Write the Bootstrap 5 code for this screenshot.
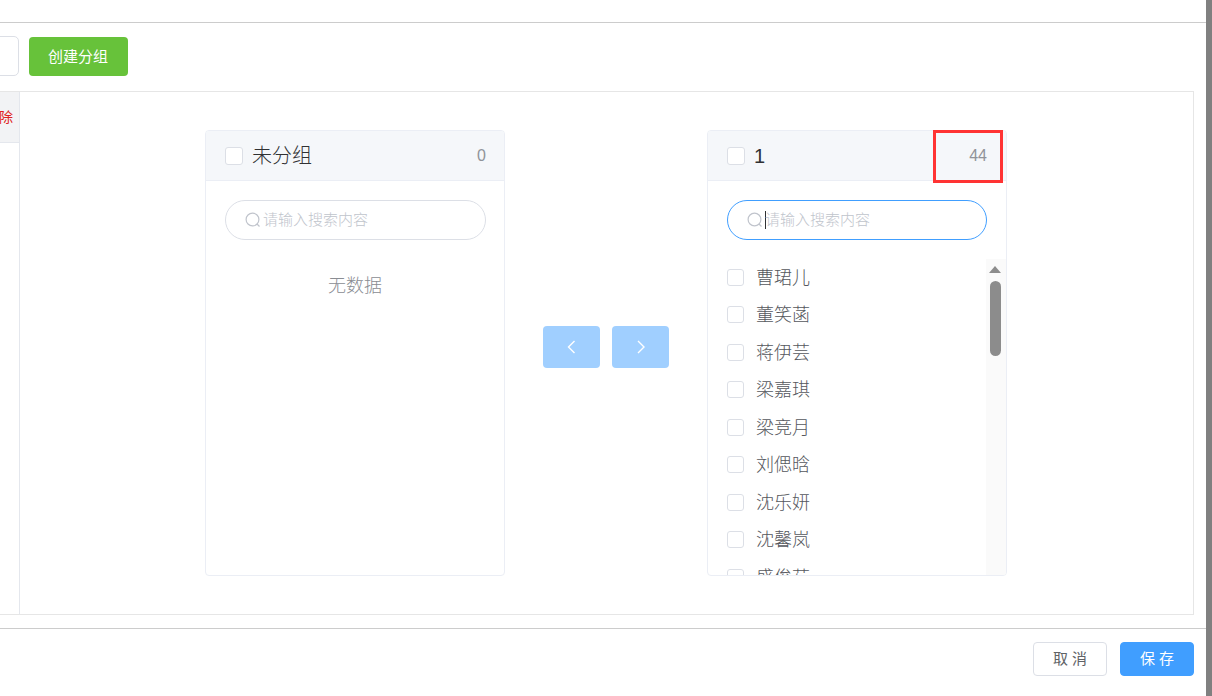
<!DOCTYPE html>
<html lang="zh">
<head>
<meta charset="utf-8">
<title>分组</title>
<link href="https://cdn.jsdelivr.net/npm/bootstrap@5.3.0/dist/css/bootstrap.min.css" rel="stylesheet">
<style>
html,body{height:696px;overflow:hidden;background:#fff;}
body{font-family:"Liberation Sans","Noto Sans CJK SC",sans-serif;color:#606266;}
.shell{height:696px;}
.rail{width:6px;background:#808080;flex:none;}
.stage{width:1206px;flex:none;}
.topband{height:23px;border-bottom:1px solid #ccc;flex:none;}
.toolband{height:68px;padding-top:13px;flex:none;}
.namebox{width:40px;height:40px;margin-left:-21px;border:1px solid #dcdfe6;border-radius:5px;background:#fff;}
.makebtn{width:99px;height:39px;margin-left:10px;margin-top:1px;background:#67c23a;border-radius:4px;color:#fff;font-size:15px;padding:2px 1px 0 0;border:0;}
.makebtn:hover{background:#67c23a;color:#fff;}
.framebox{height:524px;margin-right:12px;border:1px solid #e6e6e6;border-left:0;flex:none;}
.sidetab{width:20px;border-right:1px solid #e4e7ed;flex:none;overflow:hidden;}
.sidehead{height:51px;background:#f2f3f5;border-bottom:1px solid #e4e7ed;color:#e02020;font-size:14px;display:flex;align-items:center;justify-content:flex-end;padding-right:6px;white-space:nowrap;}
.work{padding-top:38px;padding-left:185px;}
.xferpanel{width:300px;height:446px;border:1px solid #ebeef5;border-radius:4px;position:relative;overflow:hidden;flex:none;}
.panelhead{height:50px;background:#f5f7fa;border-bottom:1px solid #ebeef5;padding:0 18px 0 19px;}
.panelhead.wide{padding-right:19px;}
.tick{width:17px;height:17px;border:1px solid #dcdfe6;border-radius:3px;background:#fff;flex:none;display:block;}
.tick-big{width:18px;height:18px;}
.panelname{font-size:20px;color:#303133;margin-left:9px;line-height:1;font-weight:300;padding-top:1px;}
.panelcount{font-size:16px;color:#909399;margin-left:auto;}
.searchrow{margin:19px 18px 0 19px;height:40px;border:1px solid #dcdfe6;border-radius:20px;padding-left:19px;font-size:15px;color:#c0c4cc;font-weight:300;}
.searchrow.live{border-color:#409eff;margin-right:19px;}
.hintgap{margin-left:2px;}
.caret{width:1px;height:18px;background:#303133;margin-left:2px;}
.livehint{margin-left:-1px;}
.emptytext{margin-top:32px;text-align:center;font-size:18px;color:#8a8d93;line-height:28px;font-weight:300;}
.listwrap{position:absolute;left:0;right:0;top:127.5px;bottom:0;overflow:hidden;}
.rowitem{height:37.5px;padding-left:19px;padding-top:2px;font-size:18px;color:#55575d;font-weight:300;}
.rowitem .tick{margin-right:12px;margin-top:-2px;}
.scrolltrack{position:absolute;top:0;bottom:0;right:0;width:20px;background:#fafafa;}
.scrollup{position:absolute;left:3px;top:7.5px;width:0;height:0;border-left:6px solid transparent;border-right:6px solid transparent;border-bottom:7px solid #8c8c8c;}
.scrollthumb{position:absolute;left:4px;top:22.5px;width:11px;height:75px;background:#8c8c8c;border-radius:6px;}
.movers{width:202px;padding-top:196px;padding-left:38px;gap:12px;flex:none;}
.movebtn{width:57px;height:42px;background:#a0cfff;border-radius:4px;flex:none;}
.alertbox{position:absolute;left:226px;top:0;width:70px;height:53px;border:3px solid #f33;}
.bottomline{height:14px;border-bottom:1px solid #ccc;margin-top:0;flex:none;}
.footband{padding-top:13px;padding-right:12px;gap:13px;}
.footbtn{width:74px;height:34px;border-radius:4px;font-size:15px;padding:0;letter-spacing:0;}
.cancelbtn{background:#fff;border:1px solid #dcdfe6;color:#606266;}
.savebtn{background:#409eff;border:1px solid #409eff;color:#fff;}
</style>
</head>
<body>
<div class="shell d-flex">
  <div class="stage d-flex flex-column">
    <div class="topband"></div>
    <div class="toolband d-flex align-items-start">
      <div class="namebox"></div>
      <button type="button" class="btn makebtn">创建分组</button>
    </div>
    <div class="framebox d-flex">
      <div class="sidetab"><div class="sidehead">除</div></div>
      <div class="work flex-grow-1 d-flex align-items-start">
        <div class="xferpanel">
          <div class="panelhead d-flex align-items-center">
            <span class="tick tick-big"></span><span class="panelname">未分组</span><span class="panelcount">0</span>
          </div>
          <div class="searchrow d-flex align-items-center">
            <svg width="16" height="16" viewBox="0 0 16 16" fill="none" stroke="#c0c4cc" stroke-width="1.2"><circle cx="7.5" cy="7.5" r="6.4"/><path d="M12 12l2.5 2.5"/></svg>
            <span class="hintgap">请输入搜索内容</span>
          </div>
          <div class="emptytext">无数据</div>
        </div>
        <div class="movers d-flex">
          <div class="movebtn d-flex align-items-center justify-content-center">
            <svg width="10" height="14" viewBox="0 0 10 14" fill="none" stroke="#fff" stroke-width="1.4"><path d="M7.5 1L1.5 7l6 6"/></svg>
          </div>
          <div class="movebtn d-flex align-items-center justify-content-center">
            <svg width="10" height="14" viewBox="0 0 10 14" fill="none" stroke="#fff" stroke-width="1.4"><path d="M2 1l6 6-6 6"/></svg>
          </div>
        </div>
        <div class="position-relative flex-none">
          <div class="xferpanel">
            <div class="panelhead wide d-flex align-items-center">
              <span class="tick tick-big"></span><span class="panelname">1</span><span class="panelcount">44</span>
            </div>
            <div class="searchrow live d-flex align-items-center">
              <svg width="16" height="16" viewBox="0 0 16 16" fill="none" stroke="#c0c4cc" stroke-width="1.2"><circle cx="7.5" cy="7.5" r="6.4"/><path d="M12 12l2.5 2.5"/></svg>
              <span class="caret"></span><span class="livehint">请输入搜索内容</span>
            </div>
            <div class="listwrap">
              <div class="rowitem d-flex align-items-center"><span class="tick"></span>曹珺儿</div>
              <div class="rowitem d-flex align-items-center"><span class="tick"></span>董笑菡</div>
              <div class="rowitem d-flex align-items-center"><span class="tick"></span>蒋伊芸</div>
              <div class="rowitem d-flex align-items-center"><span class="tick"></span>梁嘉琪</div>
              <div class="rowitem d-flex align-items-center"><span class="tick"></span>梁竞月</div>
              <div class="rowitem d-flex align-items-center"><span class="tick"></span>刘偲晗</div>
              <div class="rowitem d-flex align-items-center"><span class="tick"></span>沈乐妍</div>
              <div class="rowitem d-flex align-items-center"><span class="tick"></span>沈馨岚</div>
              <div class="rowitem d-flex align-items-center"><span class="tick"></span>盛俊茹</div>
              <div class="scrolltrack"><span class="scrollup"></span><span class="scrollthumb"></span></div>
            </div>
          </div>
          <div class="alertbox"></div>
        </div>
      </div>
    </div>
    <div class="bottomline"></div>
    <div class="footband d-flex justify-content-end">
      <button type="button" class="btn footbtn cancelbtn">取 消</button>
      <button type="button" class="btn footbtn savebtn">保 存</button>
    </div>
  </div>
  <div class="rail"></div>
</div>
</body>
</html>
